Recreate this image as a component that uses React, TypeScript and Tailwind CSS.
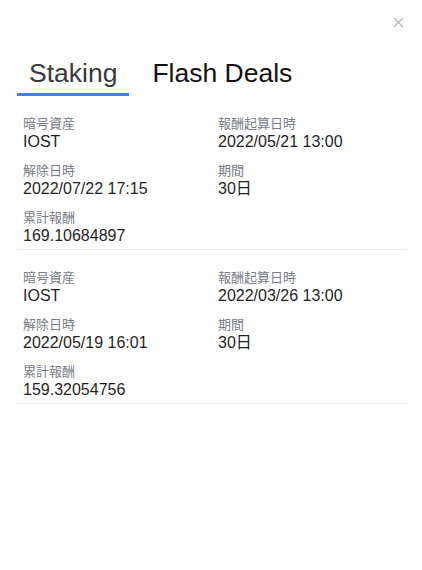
import React, { useState } from "react";

interface StakingItem {
  asset: string;
  startAt: string;
  endAt: string;
  period: string;
  reward: string;
}

const items: StakingItem[] = [
  {
    asset: "IOST",
    startAt: "2022/05/21 13:00",
    endAt: "2022/07/22 17:15",
    period: "30日",
    reward: "169.10684897",
  },
  {
    asset: "IOST",
    startAt: "2022/03/26 13:00",
    endAt: "2022/05/19 16:01",
    period: "30日",
    reward: "159.32054756",
  },
];

function Field({ label, value }: { label: string; value: string }) {
  return (
    <div className="flex flex-col">
      <span className="text-[13px] leading-4 text-[#787c86]">{label}</span>
      <span className="text-base leading-[19px] text-[#1f1f1f]">{value}</span>
    </div>
  );
}

export default function App() {
  const [tab, setTab] = useState("staking");

  return (
    <div
      className="relative h-[570px] w-[422px] bg-white"
      style={{ fontFamily: '"Liberation Sans", Arial, "Noto Sans CJK JP", sans-serif' }}
    >
      <button className="absolute left-[392px] top-[16px] flex h-[13px] w-[13px] items-center justify-center">
        <svg width="11" height="11" viewBox="0 0 11 11" fill="none">
          <path d="M1 1L10 10M10 1L1 10" stroke="#b8b8b8" strokeWidth="1.3" />
        </svg>
      </button>

      <div className="ml-[17px] mr-[15px] pt-[55px]">
        <div className="flex gap-[11px]">
          <button
            onClick={() => setTab("staking")}
            className={`border-b-[3px] px-3 pb-1 pt-[2px] text-[26.5px] leading-8 ${
              tab === "staking" ? "border-[#3b82f0] text-[#3a3a3a]" : "border-transparent text-[#111]"
            }`}
          >
            Staking
          </button>
          <button
            onClick={() => setTab("flash")}
            className={`border-b-[3px] px-3 pb-1 pt-[2px] text-[26.5px] leading-8 ${
              tab === "flash" ? "border-[#3b82f0] text-[#3a3a3a]" : "border-transparent text-[#111]"
            }`}
          >
            Flash Deals
          </button>
        </div>

        {tab === "staking" &&
          items.map((item, i) => (
            <div key={i} className="border-b border-[#ececec] px-[6px] pb-1 pt-5">
              <div className="grid grid-cols-2 gap-x-3 gap-y-3">
                <Field label="暗号資産" value={item.asset} />
                <Field label="報酬起算日時" value={item.startAt} />
                <Field label="解除日時" value={item.endAt} />
                <Field label="期間" value={item.period} />
                <Field label="累計報酬" value={item.reward} />
              </div>
            </div>
          ))}
      </div>
    </div>
  );
}
